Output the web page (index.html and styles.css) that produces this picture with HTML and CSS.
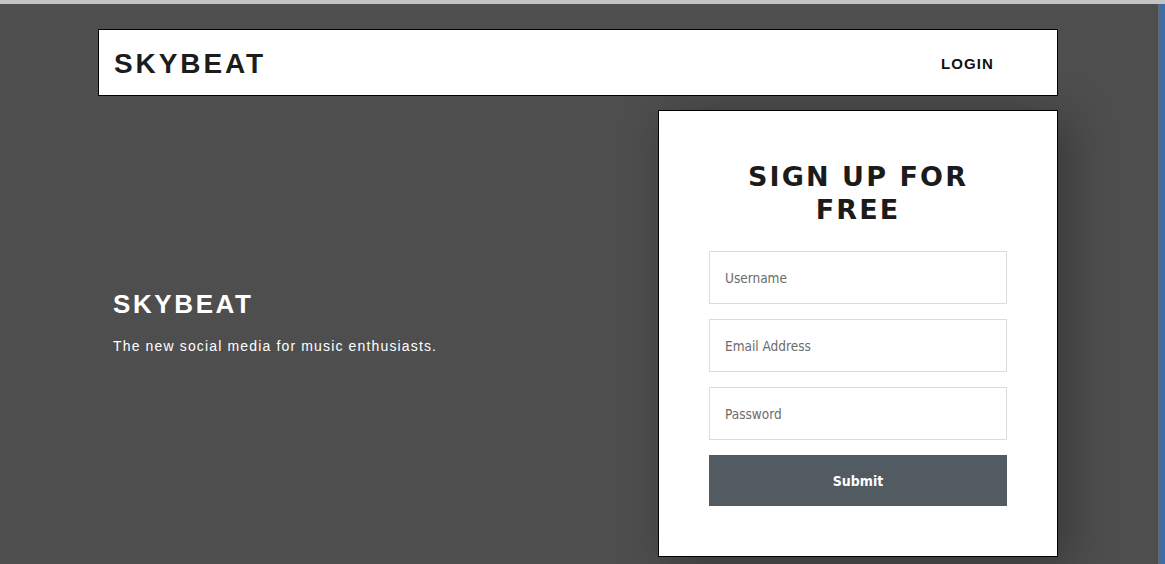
FILE: index.html
```html
<!DOCTYPE html>
<html>
<head>
<meta charset="utf-8">
<link rel="stylesheet" href="styles.css">
</head>
<body>
<div class="window">
  <div class="topline"></div>
  <div class="viewport">
    <div class="page">
      <header class="nav">
        <div class="logo">SKYBEAT</div>
        <a class="login" href="#">LOGIN</a>
      </header>
      <main class="hero">
        <section class="intro">
          <h1 class="intro-title">SKYBEAT</h1>
          <p class="intro-text">The new social media for music enthusiasts.</p>
        </section>
        <section class="card">
          <h2 class="card-title">SIGN UP FOR<br>FREE</h2>
          <form class="form">
            <input class="field" type="text" placeholder="Username">
            <input class="field" type="email" placeholder="Email Address">
            <input class="field" type="password" placeholder="Password">
            <button class="submit" type="button">Submit</button>
          </form>
        </section>
      </main>
    </div>
    <div class="edge"></div>
  </div>
</div>
</body>
</html>
```

FILE: styles.css
```css
html, body {
  margin: 0;
  padding: 0;
  height: 100%;
  overflow: hidden;
}
body {
  background: #4e4e4e;
  font-family: "Liberation Sans", Arial, sans-serif;
}
.window {
  display: flex;
  flex-direction: column;
  height: 100%;
}
.topline {
  height: 4px;
  background: #c4c4c4;
  flex: none;
}
.viewport {
  flex: 1;
  display: flex;
}
.page {
  flex: 1;
  display: flex;
  flex-direction: column;
  align-items: center;
  padding-top: 25px;
  padding-right: 2px;
}
.edge {
  width: 6px;
  flex: none;
  background: #3f6ea6;
  border-left: 1px solid #6a6a6a;
}
.nav {
  position: relative;
  z-index: 1;
  width: 880px;
  height: 65px;
  background: #fff;
  border: 1px solid #000;
  display: flex;
  align-items: center;
  justify-content: space-between;
  padding: 0 63px 0 15px;
  box-sizing: content-box;
}
.logo {
  font-weight: bold;
  font-size: 28px;
  letter-spacing: 2.9px;
  color: #1c1c1c;
  padding-top: 2px;
}
.login {
  font-weight: bold;
  font-size: 15px;
  letter-spacing: 1.1px;
  color: #111;
  text-decoration: none;
  padding-top: 2px;
}
.hero {
  width: 960px;
  margin-top: 14px;
  display: flex;
  justify-content: space-between;
  align-items: center;
}
.intro {
  padding-left: 15px;
  padding-bottom: 24px;
}
.intro-title {
  margin: 0;
  color: #fff;
  font-size: 26px;
  letter-spacing: 2.6px;
  font-weight: bold;
}
.intro-text {
  margin: 18px 0 0;
  color: #fff;
  font-size: 14px;
  letter-spacing: 1.15px;
}
.card {
  width: 400px;
  height: 447px;
  background: #fff;
  border: 1px solid #000;
  box-shadow: 10px 8px 45px rgba(0, 0, 0, 0.3);
  padding: 49px 50px 0;
  box-sizing: border-box;
}
.card-title {
  margin: 0 0 25px;
  text-align: center;
  font-family: "DejaVu Sans", Verdana, sans-serif;
  font-weight: bold;
  font-size: 27px;
  line-height: 33px;
  letter-spacing: 2.1px;
  color: #1b1b1b;
}
.form {
  display: flex;
  flex-direction: column;
  gap: 15px;
}
.field {
  height: 53px;
  box-sizing: border-box;
  border: 1px solid #dcdcdc;
  padding: 0 15px;
  font-family: "DejaVu Sans Condensed", "DejaVu Sans", Verdana, sans-serif;
  font-stretch: condensed;
  font-size: 13.5px;
  color: #444;
  outline: none;
}
.field::placeholder {
  color: #6b6b6b;
}
.submit {
  height: 51px;
  border: 0;
  background: #525a62;
  color: #fff;
  font-family: "DejaVu Sans Condensed", "DejaVu Sans", Verdana, sans-serif;
  font-stretch: condensed;
  font-weight: bold;
  font-size: 14px;
  padding-top: 1px;
}
```
